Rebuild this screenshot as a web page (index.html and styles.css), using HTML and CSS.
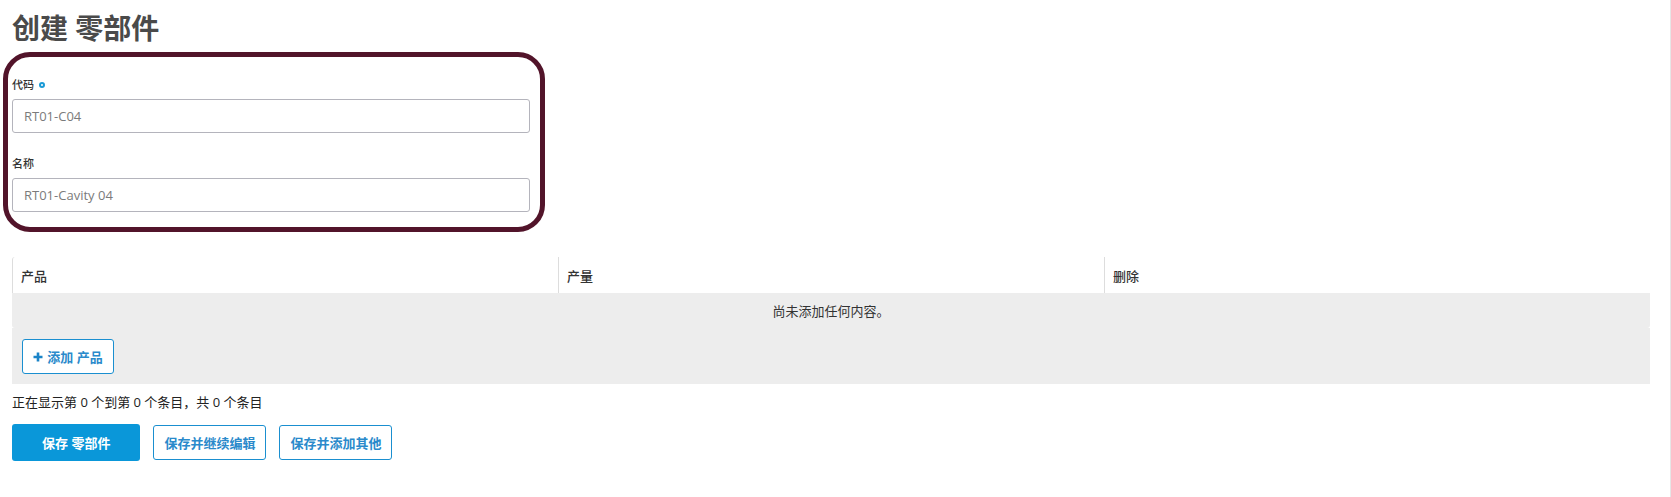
FILE: index.html
```html
<!DOCTYPE html>
<html lang="zh">
<head>
<meta charset="utf-8">
<title>创建 零部件</title>
<link rel="stylesheet" href="styles.css">
</head>
<body>
<div class="page">
  <h1 class="title">创建 零部件</h1>

  <div class="highlight">
    <div class="form-group">
      <label class="label">代码 <span class="req"></span></label>
      <input class="input" type="text" value="RT01-C04">
    </div>
    <div class="form-group">
      <label class="label">名称</label>
      <input class="input" type="text" value="RT01-Cavity 04">
    </div>
  </div>

  <div class="repeater">
    <table class="grid">
      <thead>
        <tr>
          <th>产品</th>
          <th>产量</th>
          <th>删除</th>
        </tr>
      </thead>
      <tbody>
        <tr>
          <td class="empty" colspan="3">尚未添加任何内容。</td>
        </tr>
      </tbody>
    </table>
    <div class="repeater-footer">
      <button class="btn btn-add" type="button">
        <svg class="plus" width="10" height="10" viewBox="0 0 10 10"><path d="M5 0.5V9.5M0.5 5H9.5" stroke="currentColor" stroke-width="2.6" fill="none"/></svg>
        添加 产品
      </button>
    </div>
  </div>

  <p class="status">正在显示第 0 个到第 0 个条目，共 0 个条目</p>

  <div class="actions">
    <button class="btn btn-primary" type="button">保存 零部件</button>
    <button class="btn btn-outline" type="button">保存并继续编辑</button>
    <button class="btn btn-outline" type="button">保存并添加其他</button>
  </div>
</div>
</body>
</html>
```

FILE: styles.css
```css
* { box-sizing: border-box; }

html, body {
  margin: 0;
  padding: 0;
  background: #ffffff;
}

body {
  font-family: "Open Sans", "Noto Sans CJK SC", sans-serif;
  color: #333333;
}

.page {
  min-height: 497px;
  padding: 0 20px 0 12px;
  border-right: 1px solid #e6e6e6;
  overflow: hidden;
}

.title {
  margin: 11px 0 7px;
  font-family: "Open Sans", "Noto Sans CJK SC", sans-serif;
  font-size: 28px;
  line-height: 34px;
  font-weight: 700;
  color: #4a4a4a;
}

.highlight {
  width: 542px;
  margin-left: -9px;
  padding: 20px 10px 15px 4px;
  border: 5px solid #52142a;
  border-radius: 27px;
}

.form-group + .form-group {
  margin-top: 23px;
}

.label {
  display: flex;
  align-items: center;
  gap: 5px;
  margin-bottom: 6px;
  font-size: 11px;
  line-height: 16px;
  font-weight: 500;
  color: #333333;
}

.req {
  width: 6px;
  height: 6px;
  border: 2px solid #1a9ad6;
  border-radius: 50%;
}

.input {
  display: block;
  width: 100%;
  height: 34px;
  padding: 0 11px;
  border: 1px solid #b4b4bc;
  border-radius: 3px;
  font-family: "Open Sans", "Noto Sans CJK SC", sans-serif;
  font-size: 13px;
  color: #7b7b7b;
  background: #ffffff;
  outline: none;
}

.repeater {
  margin-top: 25px;
}

.grid {
  width: 100%;
  table-layout: fixed;
  border-collapse: separate;
  border-spacing: 0;
}

.grid th {
  height: 36px;
  padding: 0 8px;
  text-align: left;
  font-size: 13px;
  font-weight: 500;
  color: #333333;
  background: #ffffff;
  border-left: 1px solid #dddddd;
}

.grid th:first-child {
  border-top-left-radius: 3px;
}

.grid td.empty {
  height: 35px;
  text-align: center;
  font-size: 13px;
  color: #333333;
  background: #ededed;
  border-radius: 0 0 3px 3px;
}

.repeater-footer {
  background: #ededed;
  padding: 11px 10px 10px;
}

.btn {
  display: inline-flex;
  align-items: center;
  justify-content: center;
  border-radius: 3px;
  font-family: "Open Sans", "Noto Sans CJK SC", sans-serif;
  font-size: 13px;
  font-weight: 700;
  cursor: pointer;
}

.btn-add {
  width: 92px;
  height: 35px;
  gap: 4px;
  padding: 0;
  border: 1px solid #1a8fd0;
  background: #ffffff;
  color: #2a8acb;
}

.plus {
  color: #1a84c8;
}

.status {
  margin: 9px 0 13px;
  font-size: 13px;
  line-height: 18px;
  color: #222222;
}

.actions {
  display: flex;
  align-items: center;
  gap: 13px;
}

.btn-primary {
  height: 37px;
  padding: 0 30px;
  border: none;
  background: #0a97d9;
  color: #ffffff;
}

.btn-outline {
  height: 35px;
  padding: 0 10px;
  border: 1px solid #1a8fd0;
  background: #ffffff;
  color: #2a8acb;
}
```
